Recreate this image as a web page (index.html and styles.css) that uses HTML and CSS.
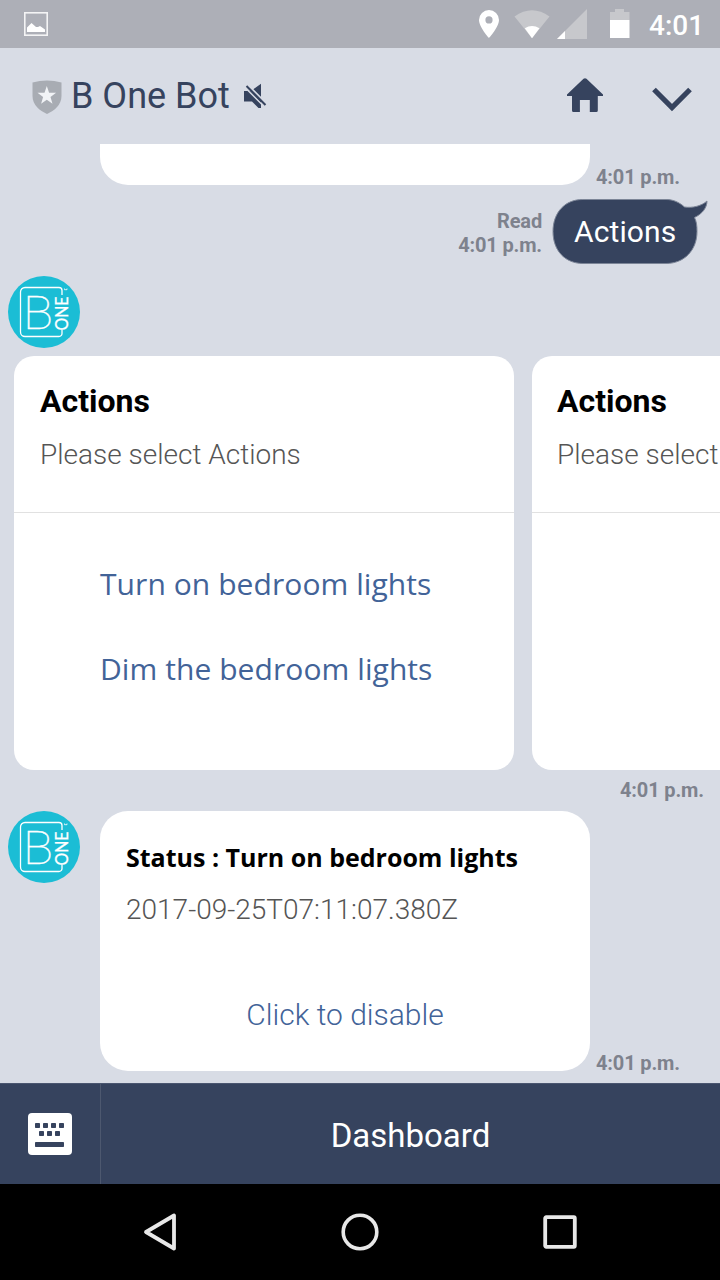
FILE: index.html
```html
<!DOCTYPE html>
<html lang="en">
<head>
<meta charset="utf-8">
<title>B One Bot</title>
<link rel="stylesheet" href="styles.css">
</head>
<body>
<div class="screen">
  <div class="statusbar">
    <svg class="picture" width="24" height="24" viewBox="0 0 24 24"><rect x=".8" y=".8" width="22.400" height="22.400" fill="none" stroke="#f4f4f5" stroke-width="1.600"/><path d="M3 20v-4.500l4.500-4.500 4.500 4h2l2-1 5 3.500V20z" fill="#fff"/></svg>
    <svg width="190" height="48" viewBox="0 0 190 48">
      <path d="M19 10a10 10 0 0 0-10 10c0 7 10 18 10 18s10-11 10-18a10 10 0 0 0-10-10zm0 6.300a3.600 3.600 0 1 1 0 7.200 3.600 3.600 0 0 1 0-7.200z" fill="#fff"/>
      <path d="M44.500 16.500Q62 4 79.500 16.500L62 38.300z" fill="#c7c8cc"/>
      <path d="M54.800 28.300Q62 23.500 69.500 28.300L62 38.300z" fill="#fff"/>
      <path d="M117 9v30H87z" fill="#c7c8cc"/><path d="M95 31v8h-8z" fill="#fff"/>
      <path d="M140 20v-8h5V9h9v3h5.500v8z" fill="#c7c8cc"/><path d="M140 20h19.500v18H140z" fill="#fff"/>
    </svg>
    <span class="clock">4:01</span>
  </div>
  <header class="header">
    <svg class="shield" width="30" height="34" viewBox="0 0 30 34"><path d="M.5 2.500Q15-1.500 29.500 2.500V16c0 9-7 14.500-14.500 18C7.500 30.500.5 25 .5 16z" fill="#a8acb3"/><path d="M14.800 6l2.300 6.700h7l-5.600 4.300 2 6.800-5.700-4-5.700 4 2-6.800L5.500 12.700h7z" fill="#f1f3f6"/></svg>
    <h1 class="title">B One Bot</h1>
    <svg class="mute" width="24" height="26" viewBox="0 0 24 26"><path d="M1 8h6l11 10v7h-2.500L9 18.500H1zM10 6.500L18 .8V15z" fill="#36435e"/><path d="M2 4.500l19 19M4.800 1.700l19 19" stroke="#d8dce5" stroke-width="1.500"/><path d="M3.500 3l19 19" stroke="#36435e" stroke-width="2"/></svg>
    <svg class="home" width="38" height="36" viewBox="0 0 38 36"><path d="M17.500.8Q19-.4 20.500.8L37 16.500v1.500h-5.200v14.500q0 1.500-1.500 1.500h-6.500V22h-9.900v12H7.500Q6 34 6 32.500V18H1v-1.500z" fill="#36435e"/></svg>
    <svg width="40" height="25" viewBox="0 0 40 25"><path d="M2 2.500l18 18L38 2.500" fill="none" stroke="#36435e" stroke-width="5.200"/></svg>
  </header>
  <main class="chat">
    <div class="row previous"><div class="card-end"></div><time class="time">4:01 p.m.</time></div>
    <div class="row sent">
      <div class="time receipt">Read<br>4:01 p.m.</div>
      <div class="bubble">
        <svg class="shape" width="158" height="68" viewBox="0 0 158 68"><path d="M32.500 1.500H116c7 0 13 2.600 18.500 7.500 8 1.200 17-1 22.500-6 0 7-5 13-12.500 16.500 2 4 2.500 8 2.500 14C147 52.500 134 65.500 116 65.500H33C15 65.500 3 52.500 3 33.500S15 1.500 32.500 1.500z" fill="#36435e" stroke="#7c8597" stroke-width="1"/></svg>
        <span class="sent-text">Actions</span>
      </div>
    </div>
    <svg class="avatar" width="72" height="72" viewBox="0 0 72 72">
      <circle cx="36" cy="36" r="36" fill="#1bbdd5"/>
      <path d="M54 19v-4.500a3 3 0 0 0-3-3H17a4.500 4.500 0 0 0-4.500 4.500v40a4.500 4.500 0 0 0 4.500 4.500h34a3 3 0 0 0 3-3V54" fill="none" stroke="#fff" stroke-width="1.300"/>
      <text class="logo-b" x="15" y="53.200" textLength="30" lengthAdjust="spacingAndGlyphs">B</text>
      <text class="logo-one" transform="translate(60 54.500) rotate(-90)" textLength="34" lengthAdjust="spacingAndGlyphs">ONE</text>
      <path d="M56.500 12.500v1.200h2.500v-1.200" fill="none" stroke="#fff" stroke-width=".8"/>
    </svg>
    <div class="carousel">
      <section class="card">
        <div class="card-head"><h2 class="card-title">Actions</h2><p class="note">Please select Actions</p></div>
        <div class="choices"><a class="choice">Turn on bedroom lights</a><a class="choice dim">Dim the bedroom lights</a></div>
      </section>
      <section class="card next">
        <div class="card-head"><h2 class="card-title">Actions</h2><p class="note">Please select</p></div>
      </section>
    </div>
    <time class="time carousel-time">4:01 p.m.</time>
    <div class="row received">
      <svg width="72" height="72" viewBox="0 0 72 72">
        <circle cx="36" cy="36" r="36" fill="#1bbdd5"/>
        <path d="M54 19v-4.500a3 3 0 0 0-3-3H17a4.500 4.500 0 0 0-4.500 4.500v40a4.500 4.500 0 0 0 4.500 4.500h34a3 3 0 0 0 3-3V54" fill="none" stroke="#fff" stroke-width="1.300"/>
        <text class="logo-b" x="15" y="53.200" textLength="30" lengthAdjust="spacingAndGlyphs">B</text>
        <text class="logo-one" transform="translate(60 54.500) rotate(-90)" textLength="34" lengthAdjust="spacingAndGlyphs">ONE</text>
        <path d="M56.500 12.500v1.200h2.500v-1.200" fill="none" stroke="#fff" stroke-width=".8"/>
      </svg>
      <section class="status-card">
        <h2 class="status-title">Status : Turn on bedroom lights</h2>
        <p class="note stamp">2017-09-25T07:11:07.380Z</p>
        <a class="disable">Click to disable</a>
      </section>
      <time class="time">4:01 p.m.</time>
    </div>
  </main>
  <div class="menu">
    <div class="keyboard"><svg width="44" height="42" viewBox="0 0 44 42"><rect width="44" height="42" rx="4" fill="#fff"/><g fill="#36435e"><rect x="7" y="10" width="5" height="5" rx=".7"/><rect x="15" y="10" width="5" height="5" rx=".7"/><rect x="23" y="10" width="5" height="5" rx=".7"/><rect x="31" y="10" width="5" height="5" rx=".7"/><rect x="11" y="18" width="5" height="5" rx=".7"/><rect x="19" y="18" width="5" height="5" rx=".7"/><rect x="27" y="18" width="5" height="5" rx=".7"/><rect x="7" y="29" width="29" height="5" rx=".7"/></g></svg></div>
    <div class="dashboard"><span class="dashboard-label">Dashboard</span></div>
  </div>
  <nav class="navbar">
    <svg width="40" height="40" viewBox="0 0 40 40"><path d="M34 3.500v33L6 20z" fill="none" stroke="#e8e8e8" stroke-width="3.800" stroke-linejoin="round"/></svg>
    <svg width="40" height="40" viewBox="0 0 40 40"><circle cx="20" cy="20" r="16.800" fill="none" stroke="#e8e8e8" stroke-width="3.600"/></svg>
    <svg width="40" height="40" viewBox="0 0 40 40"><rect x="5.200" y="5.200" width="29.600" height="29.600" rx="1" fill="none" stroke="#e8e8e8" stroke-width="3.800"/></svg>
  </nav>
</div>
</body>
</html>
```
FILE: styles.css
```css
* { box-sizing: border-box; }
body, h1, h2, p { margin: 0; }
body { font-family: Roboto, "Liberation Sans", sans-serif; }
svg { display: block; flex: none; }
.screen { width: 720px; height: 1280px; overflow: hidden; background: #d8dce5; display: flex; flex-direction: column; }
.statusbar { height: 48px; background: #adafb7; display: flex; align-items: center; padding-left: 24px; }
.picture { margin-right: 422px; }
.clock { margin-left: -11px; padding-top: 3px; color: #fff; font-size: 28px; line-height: 34px; font-weight: 500; }
.header { height: 96px; display: flex; align-items: center; padding-left: 32px; color: #36435e; }
.shield { margin-right: 9px; margin-top: 2px; }
.title { width: 160px; font-size: 36px; line-height: 42px; font-weight: 400; white-space: nowrap; }
.mute { margin-left: 12px; }
.home { margin-left: 299px; margin-right: 48px; }
.header svg:last-child { margin-top: 6px; }
.chat { height: 939px; overflow: hidden; display: flex; flex-direction: column; align-items: flex-start; }
.row { display: flex; }
.time { color: #7e828d; font-size: 20px; line-height: 24px; font-weight: 700; letter-spacing: -0.15px; white-space: nowrap; }
.previous { padding-left: 100px; gap: 6px; height: 54px; }
.previous .time { padding-top: 21px; }
.card-end { width: 490px; height: 41px; background: #fff; border-radius: 0 0 28px 28px; }
.sent { width: 720px; height: 78px; justify-content: flex-end; gap: 8px; padding-right: 12px; }
.receipt { text-align: right; padding-top: 11px; }
.bubble { width: 158px; height: 68px; position: relative; }
.shape { position: absolute; left: 0; top: 0; }
.sent-text { position: relative; display: block; padding: 16px 0 0 24px; color: #fff; font-size: 30px; line-height: 36px; letter-spacing: 0.1px; }
.avatar { margin: 0 0 8px 8px; }
.carousel { display: flex; gap: 18px; padding-left: 14px; }
.card { width: 500px; height: 414px; background: #fff; border-radius: 20px; flex: none; }
.card-head { height: 157px; border-bottom: 1px solid #e1e1e1; padding: 27px 26px 0; }
.next .card-head { padding-left: 25px; }
.card-title { font-size: 32px; line-height: 36px; color: #000; }
.note { margin-top: 19px; font-size: 28px; line-height: 34px; font-weight: 300; color: #555; white-space: nowrap; }
.choices { padding: 50px 86px 0; display: flex; flex-direction: column; }
.choice { font-family: "Open Sans", sans-serif; font-size: 30px; line-height: 42px; letter-spacing: 0.07px; color: #426398; white-space: nowrap; }
.dim { margin-top: 43px; }
.carousel-time { margin: 8px 0 9px 620px; }
.received { padding-left: 8px; height: 260px; }
.received .time { align-self: flex-end; margin: 0 0 -4px 6px; }
.status-card { width: 490px; height: 260px; margin-left: 20px; background: #fff; border-radius: 28px; padding: 29px 26px 0; }
.status-title { font-family: "Open Sans", sans-serif; font-size: 25px; line-height: 34px; color: #000; white-space: nowrap; }
.stamp { margin-top: 19px; }
.disable { display: block; margin-top: 70px; text-align: center; font-size: 30px; line-height: 36px; font-weight: 300; color: #426398; }
.menu { height: 101px; display: flex; background: #36435e; border-top: 1px solid #4a5670; color: #fff; }
.keyboard { width: 101px; border-right: 1px solid #4d586f; padding: 29px 0 0 28px; }
.dashboard { flex: 1; text-align: center; padding-top: 32px; font-size: 33px; line-height: 40px; }
.navbar { height: 96px; background: #000; display: flex; align-items: center; justify-content: center; gap: 160px; }
.logo-b { font: 100 46px Roboto, sans-serif; fill: #fff; stroke: #fff; stroke-width: 0.3px; }
.logo-one { font: 400 18px Lato, sans-serif; fill: #fff; stroke: #fff; stroke-width: 0.3px; }
```
